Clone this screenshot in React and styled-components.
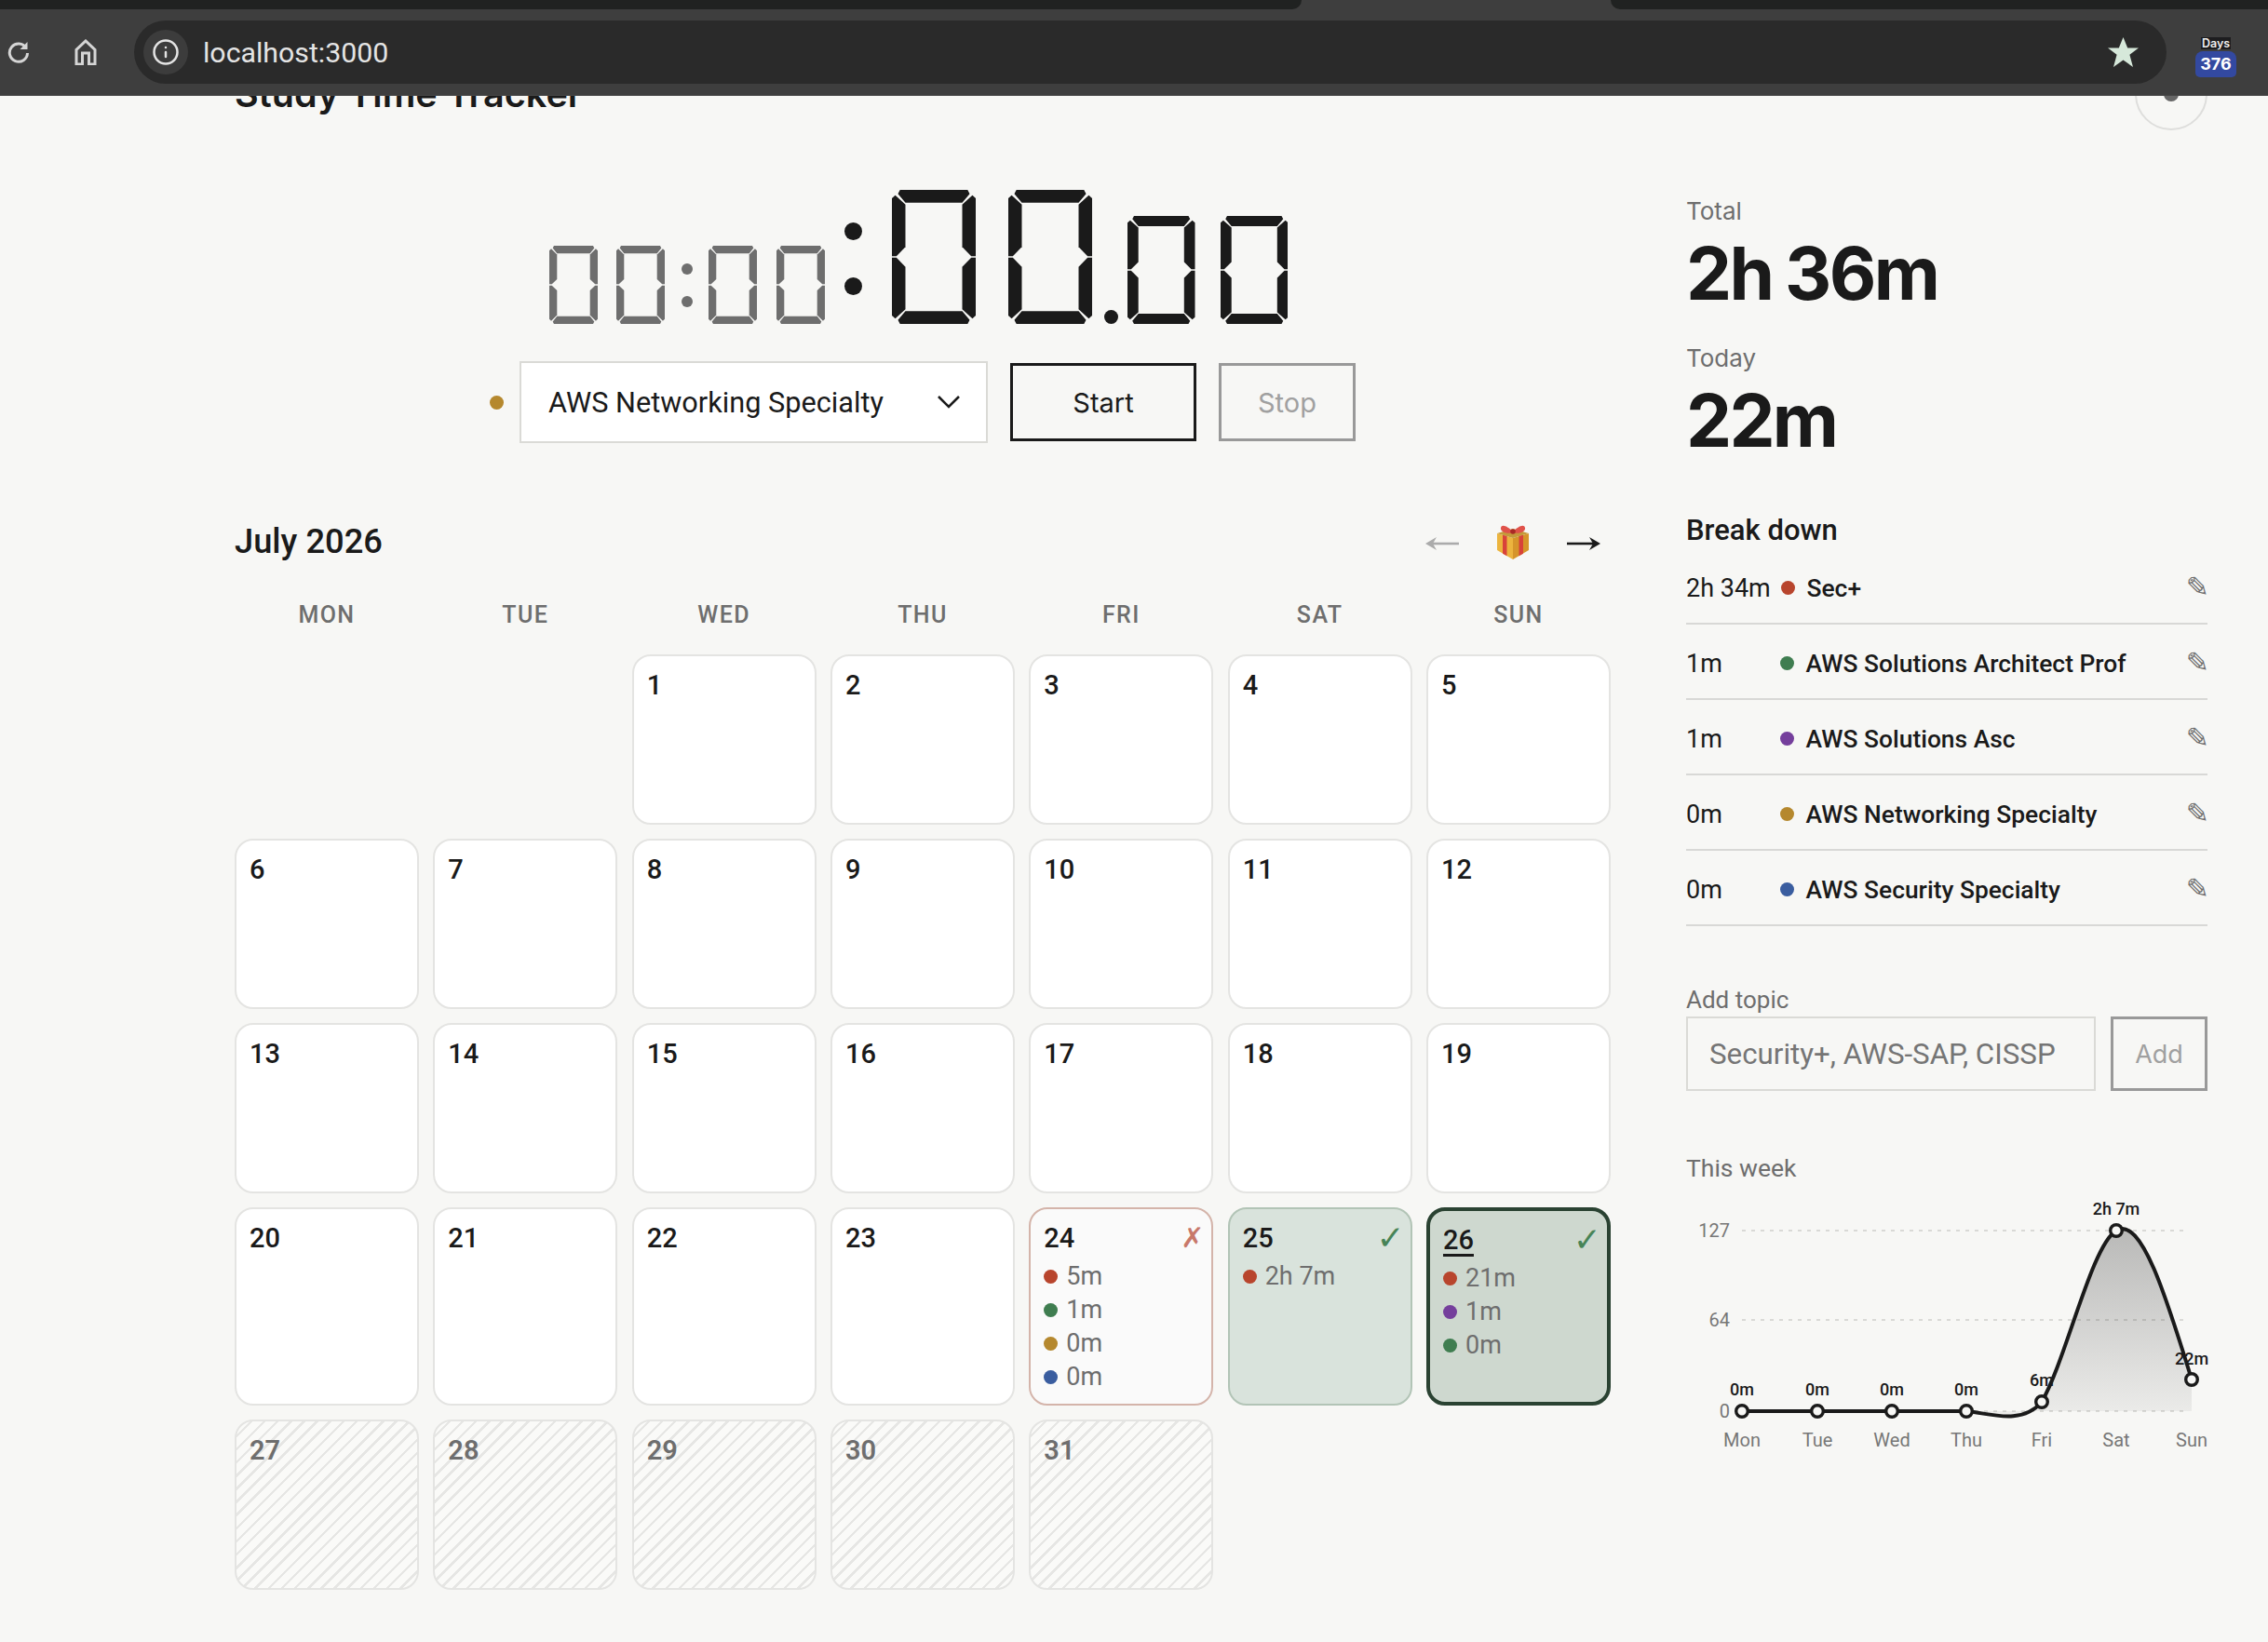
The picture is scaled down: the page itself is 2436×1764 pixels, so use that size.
import React from 'react';
import styled, { createGlobalStyle } from 'styled-components';
import { Info } from 'lucide-react';

const PLEX = `'Roboto', 'Noto Sans', sans-serif`;
const GROT = `'Inter', 'Liberation Sans', sans-serif`;

const Global = createGlobalStyle`
  html, body { margin: 0; padding: 0; background: #f7f7f5; }
  * { box-sizing: border-box; }
  body { font-family: ${PLEX}; color: #1a1a1a; }
`;

const Viewport = styled.div`
  width: 2436px; height: 1764px; display: flex; flex-direction: column; overflow: hidden; background: #f7f7f5;
`;
const Chrome = styled.header`
  height: 103px; flex: none; background: #3e3e3e; position: relative; z-index: 2;
  display: flex; flex-direction: column; border-bottom: 1px solid #454545;
`;
const TabStrip = styled.div`
  height: 10px; flex: none; display: flex; justify-content: space-between;
`;
const TabSlab = styled.div`
  width: ${p => p.$w}px; background: #202221;
  border-radius: ${p => (p.$left ? '0 0 14px 0' : '0 0 0 14px')};
`;
const Toolbar = styled.div`
  flex: 1; display: flex; align-items: center; padding: 2px 34px 2px 8px;
`;
const ToolIcon = styled.svg`
  flex: none; width: ${p => p.$w}px; height: ${p => p.$h}px; margin-right: ${p => p.$mr}px;
  fill: none; stroke: #d5d5d5; stroke-width: 3;
`;
const UrlBar = styled.div`
  flex: none; width: 2183px; height: 68px; border-radius: 34px; background: #2a2a2a;
  display: flex; align-items: center; padding: 0 28px 0 10px;
`;
const InfoChip = styled.div`
  width: 48px; height: 48px; border-radius: 50%; background: #3c3c3c; color: #e4e4e4;
  display: flex; align-items: center; justify-content: center; flex: none;
`;
const UrlText = styled.span`
  margin-left: 16px; flex: 1; font: 400 30.3px ${PLEX}; color: #e4e4e4;
`;
const Star = styled.svg`
  width: 33px; height: 32px; fill: #d6e8da; flex: none; margin-left: -2px; margin-right: 2px;
`;
const Badge = styled.div`
  margin: 11px 0 0 31px; width: 44px; display: flex; flex-direction: column; align-items: center; gap: 2px;
`;
const BadgeLabel = styled.span`
  background: #1d1d1f; color: #eee; font: 600 12.5px/13px ${GROT}; padding: 0 1px;
`;
const BadgeCount = styled.span`
  width: 44px; height: 28px; border-radius: 8px 8px 5px 5px; background: #3349a0; color: #fff;
  font: 700 18px/28px ${GROT}; text-align: center;
`;

const Scroller = styled.main`
  flex: 1; overflow: hidden; padding: 0 65px 0 252px;
`;
const TopBar = styled.div`
  margin-top: -41px; height: 77px; display: flex; align-items: center; justify-content: space-between;
`;
const PageTitle = styled.h1`
  margin: 0; font: 600 39.6px/50px ${GROT}; color: #1a1a1a;
`;
const ToggleRing = styled.div`
  width: 78px; height: 78px; border-radius: 50%; border: 2px solid #dededc;
  display: flex; align-items: center; justify-content: center;
`;
const ToggleDot = styled.span`
  width: 16px; height: 16px; border-radius: 50%; background: #666;
`;
const Columns = styled.div`
  display: grid; grid-template-columns: 1478px 560px; column-gap: 81px; align-items: start;
`;
const LeftCol = styled.section`
  padding-top: 65px; display: flex; flex-direction: column;
`;
const TimerRow = styled.div`
  display: flex; justify-content: center; align-items: flex-end; height: 144px; padding-right: 9px;
`;
const DigitPair = styled.div`
  display: flex; gap: ${p => p.$gap}px; align-items: flex-end;
`;
const Colon = styled.div`
  display: flex; flex-direction: column; gap: ${p => p.$gap}px; margin: 0 ${p => p.$right}px ${p => p.$bottom}px ${p => p.$left}px;
`;
const ColonDot = styled.span`
  display: block; width: ${p => p.$size}px; height: ${p => p.$size}px; border-radius: 50%; background: ${p => p.$color};
`;
const DigitSvg = styled.svg`
  display: block; flex: none; fill: ${p => p.$color};
`;
const ControlRow = styled.div`
  margin-top: 40px; display: flex; align-items: center; justify-content: center; height: 88px;
`;
const TopicDot = styled.span`
  flex: none; display: block; width: ${p => p.$size || 15}px; height: ${p => p.$size || 15}px; border-radius: 50%; background: ${p => p.$color};
`;
const SelectBox = styled.div`
  margin-left: 17px; width: 503px; height: 88px; border: 2px solid #dadad6; background: #fff;
  display: flex; align-items: center; justify-content: space-between; padding: 0 28px 0 29px;
  font: 400 30.7px ${PLEX}; color: #1a1a1a;
`;
const Chevron = styled.svg`
  width: 24px; height: 14px; fill: none; stroke: #1a1a1a; stroke-width: 2.6;
`;
const OutlineButton = styled.button`
  width: ${p => p.$w}px; height: ${p => p.$h}px; margin-left: ${p => p.$ml}px; background: transparent;
  border: 3px solid ${p => (p.$off ? '#999' : '#1a1a1a')}; color: ${p => (p.$off ? '#a0a0a0' : '#1a1a1a')};
  font: 400 ${p => p.$fs}px ${GROT}; padding: 0; border-radius: 0;
`;
const MonthBar = styled.div`
  margin-top: 84px; height: 44px; display: flex; align-items: center; justify-content: space-between; padding-right: 11px;
`;
const MonthTitle = styled.h2`
  margin: 0; font: 500 36.3px/44px ${PLEX}; color: #1a1a1a;
`;
const MonthNav = styled.div`
  display: flex; align-items: center; gap: 39px;
`;
const ArrowSvg = styled.svg`
  width: 36px; height: 18px; display: block; margin-top: 4px;
  fill: ${p => p.$color}; stroke: ${p => p.$color};
`;
const GiftSvg = styled.svg`
  width: 38px; height: 38px; display: block;
`;
const WeekRow = styled.div`
  margin-top: 40px; display: grid; grid-template-columns: repeat(7, 1fr); column-gap: 15.33px; height: 59px;
`;
const WeekDay = styled.div`
  text-align: center; font: 500 25px/34px ${PLEX}; letter-spacing: 1.4px; color: #6e6e6e;
`;
const CalGrid = styled.div`
  display: grid; grid-template-columns: repeat(7, 1fr); gap: 15px 15.33px; grid-auto-rows: minmax(183px, auto);
`;
const Empty = styled.div``;
const tones = {
  plain: 'background:#fff;border:2px solid #e4e4e2;',
  missed: 'background:#fafafa;border:2px solid #d4b4aa;',
  hit: 'background:#d9e3dc;border:2px solid #b2c4b6;',
  today: 'background:#ced8cf;border:4px solid #2a4232;',
  future: 'border:2px solid #e4e4e2;background:repeating-linear-gradient(135deg,#e6e6e4 0 2.5px,#fafaf8 2.5px 10px);',
};
const Cell = styled.div`
  border-radius: 20px; padding: 13px 14px 11px; position: relative; ${p => tones[p.$tone]}
`;
const DayNum = styled.div`
  font: ${p => (p.$future ? 600 : 500)} 29px/36px ${PLEX}; margin-bottom: 5px;
  color: ${p => (p.$future ? '#6e6e6e' : '#1a1a1a')};
  span { text-decoration: ${p => (p.$under ? 'underline 3px' : 'none')}; text-underline-offset: 5px; }
`;
const Mark = styled.span`
  position: absolute; top: 13px; right: ${p => p.$right}px; font: 400 ${p => p.$size}px/36px 'DejaVu Sans', sans-serif; color: ${p => p.$color};
`;
const CellRow = styled.div`
  height: 36px; display: flex; align-items: center; gap: 9px; font: 400 27px/36px ${PLEX}; color: #6e6e6e;
`;
const Side = styled.aside`
  padding-top: 70px; display: flex; flex-direction: column;
`;
const StatLabel = styled.div`
  font: 400 26px/35px ${GROT}; color: #6e6e6e; margin-top: ${p => p.$mt || 0}px;
`;
const StatValue = styled.div`
  font: 700 78px/92px ${GROT}; color: #1a1a1a; letter-spacing: -2.7px; word-spacing: -2px; margin-top: 4px;
`;
const BreakTitle = styled.h3`
  margin: 52px 0 0; font: 500 31px/40px ${PLEX};
`;
const BreakList = styled.div`
  margin-top: 19px; display: flex; flex-direction: column;
`;
const BreakRow = styled.div`
  height: 81px; border-bottom: 2px solid #d8d8d6; display: flex; align-items: center; padding-top: 4px; margin-top: ${p => (p.$first ? -19 : 0)}px;
`;
const BreakTime = styled.span`
  width: ${p => (p.$wide ? 102 : 101)}px; flex: none; font: 400 27px ${PLEX}; color: #1a1a1a;
`;
const BreakName = styled.span`
  flex: 1; margin-left: 12.5px; font: 500 26.4px ${PLEX}; color: #1a1a1a;
`;
const Pencil = styled.span`
  font: 400 30px 'DejaVu Sans', sans-serif; color: #6f6f6f; margin-top: -2px; margin-right: -2px;
`;
const AddLabel = styled.div`
  margin-top: 62px; font: 400 26px/35px ${PLEX}; color: #6e6e6e;
`;
const AddRow = styled.div`
  margin-top: 0; display: flex; gap: 16px;
`;
const TopicInput = styled.input`
  width: 440px; height: 80px; border: 2px solid #dadad6; background: transparent; padding: 0 23px;
  font: 400 31.3px ${PLEX}; outline: none;
  &::placeholder { color: #757575; opacity: 1; }
`;
const WeekLabel = styled.div`
  margin-top: 65px; font: 400 26.5px/36px ${PLEX}; color: #6e6e6e;
`;
const ChartSvg = styled.svg`
  margin-top: 15.5px; display: block; overflow: visible; width: 560px; height: 280px;
`;
const AxisText = styled.text`
  font: 400 20px ${PLEX}; fill: #777;
`;
const ValueText = styled.text`
  font: 500 18px ${PLEX}; fill: #1a1a1a;
`;

const RED = '#b8452d', GREEN = '#3f7d50', PURPLE = '#753f9c', GOLD = '#b5882e', BLUE = '#3a5d9f';

function Digit({ w, h, tv, th, color }) {
  const k = tv / 15, m = h / 2, gap = 0.75;
  const topBar = flip => {
    const Y = v => (flip ? h - v : v);
    return [[9 * k, Y(0)], [w - 9 * k, Y(0)], [w - 6.7 * k, Y(4.3 * k)], [w - tv, Y(th)], [tv, Y(th)], [6.7 * k, Y(4.3 * k)]];
  };
  const side = (right, lower) => {
    const X = v => (right ? w - v : v);
    const Y = v => (lower ? h - v : v);
    return [[X(3.7 * k), Y(6 * k)], [X(tv), Y(th + 2 * k)], [X(tv), Y(m - 11 * k)], [X(tv - 10 * k), Y(m - gap)], [X(0), Y(m - gap)], [X(0), Y(9.3 * k)]];
  };
  const polys = [topBar(false), topBar(true), side(false, false), side(false, true), side(true, false), side(true, true)];
  return (
    <DigitSvg $color={color} width={w} height={h} viewBox={`0 0 ${w} ${h}`}>
      {polys.map((p, i) => <polygon key={i} points={p.map(q => q.join(',')).join(' ')} />)}
    </DigitSvg>
  );
}

function controlPoints(x) {
  const n = x.length - 1, a = new Array(n), b = new Array(n), r = new Array(n);
  a[0] = 0; b[0] = 2; r[0] = x[0] + 2 * x[1];
  for (let i = 1; i < n - 1; ++i) { a[i] = 1; b[i] = 4; r[i] = 4 * x[i] + 2 * x[i + 1]; }
  a[n - 1] = 2; b[n - 1] = 7; r[n - 1] = 8 * x[n - 1] + x[n];
  for (let i = 1; i < n; ++i) { const m = a[i] / b[i - 1]; b[i] -= m; r[i] -= m * r[i - 1]; }
  a[n - 1] = r[n - 1] / b[n - 1];
  for (let i = n - 2; i >= 0; --i) a[i] = (r[i] - a[i + 1]) / b[i];
  b[n - 1] = (x[n] + a[n - 1]) / 2;
  for (let i = 0; i < n - 1; ++i) b[i] = 2 * x[i + 1] - a[i + 1];
  return [a, b];
}
// Natural spline from Fri onward; the flat Mon-Thu stretch stays straight, as in the chart.
function weekPath(pts) {
  const xs = pts.map(p => p[0]), ys = pts.map(p => p[1]);
  const [ax, bx] = controlPoints(xs), [ay, by] = controlPoints(ys);
  let d = `M${xs[0]},${ys[0]}L${xs[3]},${ys[3]}`;
  d += `C${xs[3] + 24},${ys[3] + 2} ${xs[4] - 22},${ys[4] + 26} ${xs[4]},${ys[4]}`;
  for (let i = 4; i < xs.length - 1; i++) d += `C${ax[i]},${ay[i]} ${bx[i]},${by[i]} ${xs[i + 1]},${ys[i + 1]}`;
  return d;
}

const ox = 1811, oy = 1290;
const chartPoints = [
  { day: 'Mon', x: 1871, y: 1517, label: '0m', ly: 1500 },
  { day: 'Tue', x: 1952, y: 1517, label: '0m', ly: 1500 },
  { day: 'Wed', x: 2032, y: 1517, label: '0m', ly: 1500 },
  { day: 'Thu', x: 2112, y: 1517, label: '0m', ly: 1500 },
  { day: 'Fri', x: 2193, y: 1507, label: '6m', ly: 1490 },
  { day: 'Sat', x: 2273, y: 1323, label: '2h 7m', ly: 1306 },
  { day: 'Sun', x: 2354, y: 1483, label: '22m', ly: 1467 },
].map(p => ({ ...p, x: p.x - ox, y: p.y - oy, ly: p.ly - oy }));

function WeekChart() {
  const line = weekPath(chartPoints.map(p => [p.x, p.y]));
  const base = 1517 - oy;
  const area = `${line}L${chartPoints[6].x},${base}L${chartPoints[0].x},${base}Z`;
  return (
    <ChartSvg viewBox="0 0 560 280">
      <defs>
        <linearGradient id="weekFill" x1="0" y1="0" x2="0" y2="1">
          <stop offset="0%" stopColor="#1a1a1a" stopOpacity="0.28" />
          <stop offset="100%" stopColor="#1a1a1a" stopOpacity="0.05" />
        </linearGradient>
      </defs>
      {[1323, 1419, 1517].map(y => (
        <line key={y} x1={60} x2={540} y1={y - oy} y2={y - oy} stroke="#d9d9d6" strokeWidth="2" strokeDasharray="4 6" />
      ))}
      {[['127', 1323], ['64', 1419], ['0', 1517]].map(([t, y]) => (
        <AxisText key={t} x={47} y={y - oy + 7} textAnchor="end">{t}</AxisText>
      ))}
      <path d={area} fill="url(#weekFill)" />
      {chartPoints.map(p => (
        <ValueText key={p.day} x={p.x} y={p.ly} textAnchor="middle">{p.label}</ValueText>
      ))}
      <path d={line} fill="none" stroke="#1a1a1a" strokeWidth="4" />
      {chartPoints.map(p => (
        <circle key={p.day} cx={p.x} cy={p.y} r="6.300" fill="#f7f7f5" stroke="#1a1a1a" strokeWidth="3.400" />
      ))}
      {chartPoints.map(p => (
        <AxisText key={p.day} x={p.x} y={1555 - oy} textAnchor="middle">{p.day}</AxisText>
      ))}
    </ChartSvg>
  );
}

const cells = [];
for (let d = 1; d <= 31; d++) cells.push(d);
const cellData = {
  24: { tone: 'missed', mark: '✗', markSize: 30, markRight: 8, markColor: '#c8786a', rows: [[RED, '5m'], [GREEN, '1m'], [GOLD, '0m'], [BLUE, '0m']] },
  25: { tone: 'hit', mark: '✓', markSize: 36, markRight: 6, markColor: '#478457', rows: [[RED, '2h 7m']] },
  26: { tone: 'today', mark: '✓', markSize: 36, markRight: 6, markColor: '#478457', rows: [[RED, '21m'], [PURPLE, '1m'], [GREEN, '0m']] },
};
const breakdown = [
  ['2h 34m', RED, 'Sec+'],
  ['1m', GREEN, 'AWS Solutions Architect Prof'],
  ['1m', PURPLE, 'AWS Solutions Asc'],
  ['0m', GOLD, 'AWS Networking Specialty'],
  ['0m', BLUE, 'AWS Security Specialty'],
];

export default function App() {
  const gray = '#6e6e6e', ink = '#1a1a1a';
  return (
    <Viewport>
      <Global />
      <Chrome>
        <TabStrip>
          <TabSlab $w={1398} $left />
          <TabSlab $w={706} />
        </TabStrip>
        <Toolbar>
          <ToolIcon $w={24} $h={26} $mr={48} viewBox="0 0 24 26">
            <path d="M20 8.500A9.600 9.600 0 1 0 21.500 14" />
            <path d="M21.500 2v8h-8z" fill="#d5d5d5" stroke="none" />
          </ToolIcon>
          <ToolIcon $w={24} $h={28} $mr={40} viewBox="0 0 24 28">
            <path d="M2 27V11.500L12 2l10 9.500V27h-6.500V15h-7v12z" />
          </ToolIcon>
          <UrlBar>
            <InfoChip><Info size={30} strokeWidth={2} /></InfoChip>
            <UrlText>localhost:3000</UrlText>
            <Star viewBox="0 0 33 32"><path d="M16.500 0l4.700 11.400H33l-9.600 7.400L27 32l-10.500-7.600L6 32l3.600-13.200L0 11.400h11.800z" /></Star>
          </UrlBar>
          <Badge>
            <BadgeLabel>Days</BadgeLabel>
            <BadgeCount>376</BadgeCount>
          </Badge>
        </Toolbar>
      </Chrome>
      <Scroller>
        <TopBar>
          <PageTitle>Study Time Tracker</PageTitle>
          <ToggleRing><ToggleDot /></ToggleRing>
        </TopBar>
        <Columns>
          <LeftCol>
            <TimerRow>
              <DigitPair $gap={20}>
                <Digit w={52} h={84} tv={8.3} th={8.3} color={gray} />
                <Digit w={52} h={84} tv={8.3} th={8.3} color={gray} />
              </DigitPair>
              <Colon $gap={23} $left={18} $right={17} $bottom={18}>
                <ColonDot $size={12} $color={gray} />
                <ColonDot $size={12} $color={gray} />
              </Colon>
              <DigitPair $gap={21}>
                <Digit w={52} h={84} tv={8.3} th={8.3} color={gray} />
                <Digit w={52} h={84} tv={8.3} th={8.3} color={gray} />
              </DigitPair>
              <Colon $gap={40} $left={21} $right={32} $bottom={31}>
                <ColonDot $size={19} $color={ink} />
                <ColonDot $size={19} $color={ink} />
              </Colon>
              <DigitPair $gap={35}>
                <Digit w={90} h={144} tv={14.5} th={13.7} color={ink} />
                <Digit w={90} h={144} tv={14.5} th={13.7} color={ink} />
              </DigitPair>
              <Colon $gap={0} $left={13} $right={10} $bottom={0}>
                <ColonDot $size={15} $color={ink} />
              </Colon>
              <DigitPair $gap={27}>
                <Digit w={72.5} h={116} tv={11.7} th={11} color={ink} />
                <Digit w={72.5} h={116} tv={11.7} th={11} color={ink} />
              </DigitPair>
            </TimerRow>
            <ControlRow>
              <TopicDot $color={GOLD} />
              <SelectBox>
                AWS Networking Specialty
                <Chevron viewBox="0 0 24 14"><path d="M1 1l11 11L23 1" /></Chevron>
              </SelectBox>
              <OutlineButton $w={200} $h={84} $ml={24} $fs={29}>Start</OutlineButton>
              <OutlineButton $off $w={147} $h={84} $ml={24} $fs={29}>Stop</OutlineButton>
            </ControlRow>
            <MonthBar>
              <MonthTitle>July 2026</MonthTitle>
              <MonthNav>
                <ArrowSvg $color="#ababab" viewBox="0 0 36 18">
                  <path d="M36 9H4" strokeWidth="2.600" fill="none" />
                  <path d="M12 2L0 9l12 7-4-7z" stroke="none" />
                </ArrowSvg>
                <GiftSvg viewBox="0 0 38 38">
                  <path d="M19 15L36 10V28L19 38z" fill="#d6952a" />
                  <path d="M19 15L2 10V28l17 10z" fill="#ecb43e" />
                  <path d="M2 10L19 5l17 5L19 15z" fill="#c49a3a" />
                  <path d="M8 11.800l4.500 1.300V34.300L8 31.800zM25.500 13.100l4.500-1.300v20l-4.500 2.500z" fill="#d8433a" />
                  <path d="M19 8C14 3 7-1 6 4c-.800 4 6 7 13 5 7 2 13.800-1 13-5-1-5-8-1-13 4z" fill="#e0524a" />
                  <circle cx="19" cy="8" r="2.800" fill="#a92a25" />
                </GiftSvg>
                <ArrowSvg $color="#1a1a1a" viewBox="0 0 36 18">
                  <path d="M0 9h32" strokeWidth="2.600" fill="none" />
                  <path d="M24 2l12 7-12 7 4-7z" stroke="none" />
                </ArrowSvg>
              </MonthNav>
            </MonthBar>
            <WeekRow>
              {['MON', 'TUE', 'WED', 'THU', 'FRI', 'SAT', 'SUN'].map(d => <WeekDay key={d}>{d}</WeekDay>)}
            </WeekRow>
            <CalGrid>
              <Empty />
              <Empty />
              {cells.map(d => {
                const data = cellData[d];
                const tone = data ? data.tone : d >= 27 ? 'future' : 'plain';
                return (
                  <Cell key={d} $tone={tone}>
                    <DayNum $future={d >= 27} $under={d === 26}><span>{d}</span></DayNum>
                    {data && <Mark $color={data.markColor} $size={data.markSize} $right={data.markRight}>{data.mark}</Mark>}
                    {data && data.rows.map(([c, t], i) => (
                      <CellRow key={i}><TopicDot $color={c} />{t}</CellRow>
                    ))}
                  </Cell>
                );
              })}
            </CalGrid>
          </LeftCol>
          <Side>
            <StatLabel>Total</StatLabel>
            <StatValue>2h 36m</StatValue>
            <StatLabel $mt={27}>Today</StatLabel>
            <StatValue>22m</StatValue>
            <BreakTitle>Break down</BreakTitle>
            <BreakList>
              {breakdown.map(([t, c, n], i) => (
                <BreakRow key={n} $first={i === 0}>
                  <BreakTime $wide={i === 0}>{t}</BreakTime>
                  <TopicDot $color={c} />
                  <BreakName>{n}</BreakName>
                  <Pencil>✎</Pencil>
                </BreakRow>
              ))}
            </BreakList>
            <AddLabel>Add topic</AddLabel>
            <AddRow>
              <TopicInput placeholder="Security+, AWS-SAP, CISSP" />
              <OutlineButton $off $w={104} $h={80} $ml={0} $fs={27}>Add</OutlineButton>
            </AddRow>
            <WeekLabel>This week</WeekLabel>
            <WeekChart />
          </Side>
        </Columns>
      </Scroller>
    </Viewport>
  );
}
